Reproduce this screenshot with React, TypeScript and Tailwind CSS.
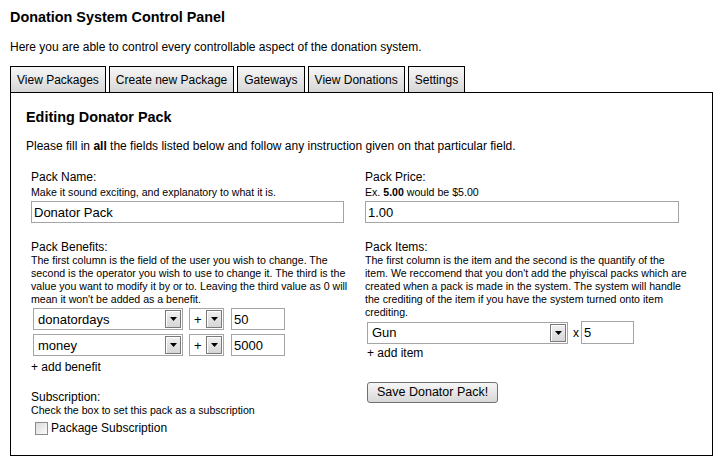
import React from "react";

function Select({ value, width }: { value: string; width: string }) {
  return (
    <div className={`flex h-[22px] items-stretch border border-[#a5a5a5] bg-white ${width}`}>
      <div className="flex flex-1 items-center pl-[4px] text-[13px] leading-none text-black">{value}</div>
      <div className="m-px flex w-[16px] items-center justify-center border border-[#7a7a7a] bg-linear-to-b from-[#f0f0f0] to-[#d6d6d6] shadow-[inset_1px_1px_0_#ffffff]">
        <svg width="7" height="4" viewBox="0 0 7 4">
          <path d="M0 0 H7 L3.5 4 Z" fill="#000" />
        </svg>
      </div>
    </div>
  );
}

function Input({ value, width, h = "h-[22px]" }: { value: string; width: string; h?: string }) {
  return (
    <div className={`flex ${h} items-center border border-[#a5a5a5] bg-white pl-[2px] text-[13px] leading-none text-black ${width}`}>
      {value}
    </div>
  );
}

export default function App() {
  const tabs = ["View Packages", "Create new Package", "Gateways", "View Donations", "Settings"];
  return (
    <div className="h-[472px] w-[725px] bg-white pl-[10px] text-black" style={{ fontFamily: "'Liberation Sans', Arial, sans-serif" }}>
      <div className="pt-[7px] text-[14.4px] font-bold leading-[20px]">Donation System Control Panel</div>
      <div className="mt-[12px] text-[12px] leading-[16px]">
        Here you are able to control every controllable aspect of the donation system.
      </div>
      <div className="mt-[11px] flex gap-[3px]">
        {tabs.map((t) => (
          <div
            key={t}
            className="flex h-[26px] items-center border border-b-0 border-black bg-linear-to-b from-[#f7f7f7] to-[#d6d6d6] px-[6px] text-[12px]"
          >
            {t}
          </div>
        ))}
      </div>
      <div className="h-[364px] w-[703px] border border-black pl-[15px] pt-[14px]">
        <div className="text-[14.4px] font-bold leading-[20px]">Editing Donator Pack</div>
        <div className="mt-[11px] text-[12px] leading-[16px]">
          Please fill in <b>all</b> the fields listed below and follow any instruction given on that particular field.
        </div>
        <div className="mt-[16px] grid grid-cols-[334px_1fr] pl-[5px]">
          <div>
            <div className="text-[12px] leading-[14px]">Pack Name:</div>
            <div className="mt-[2px] text-[10.6px] leading-[12px]">Make it sound exciting, and explanatory to what it is.</div>
            <div className="mt-[3px]">
              <Input value="Donator Pack" width="w-[313px]" />
            </div>
            <div className="mt-[17px] text-[12px] leading-[14px]">Pack Benefits:</div>
            <div className="whitespace-nowrap text-[10.6px] leading-[13px]">
              <div>The first column is the field of the user you wish to change. The</div>
              <div>second is the operator you wish to use to change it. The third is the</div>
              <div>value you want to modify it by or to. Leaving the third value as 0 will</div>
              <div>mean it won't be added as a benefit.</div>
            </div>
            <div className="mt-[2px] flex flex-col gap-[4px] pl-[2px]">
              {[
                ["donatordays", "50"],
                ["money", "5000"],
              ].map(([f, v]) => (
                <div key={f} className="flex items-center">
                  <Select value={f} width="w-[150px]" />
                  <div className="ml-[6px]">
                    <Select value="+" width="w-[35px]" />
                  </div>
                  <div className="ml-[7px]">
                    <Input value={v} width="w-[54px]" />
                  </div>
                </div>
              ))}
            </div>
            <div className="mt-[3px] text-[12px] leading-[16px]">+ add benefit</div>
            <div className="mt-[15px] text-[12px] leading-[14px]">Subscription:</div>
            <div className="text-[10.6px] leading-[12px]">Check the box to set this pack as a subscription</div>
            <div className="mt-[4px] flex items-center pl-[4px]">
              <div className="h-[13px] w-[13px] border border-[#8c8c8c] bg-linear-to-br from-[#dcdcdc] to-[#fafafa]" />
              <span className="ml-[3px] text-[12px] leading-[16px]">Package Subscription</span>
            </div>
          </div>
          <div>
            <div className="text-[12px] leading-[14px]">Pack Price:</div>
            <div className="mt-[2px] text-[10.6px] leading-[12px]">
              Ex. <b>5.00</b> would be $5.00
            </div>
            <div className="mt-[3px]">
              <Input value="1.00" width="w-[314px]" />
            </div>
            <div className="mt-[17px] text-[12px] leading-[14px]">Pack Items:</div>
            <div className="whitespace-nowrap text-[10.6px] leading-[13px]">
              <div>The first column is the item and the second is the quantify of the</div>
              <div>item. We reccomend that you don't add the phyiscal packs which are</div>
              <div>created when a pack is made in the system. The system will handle</div>
              <div>the crediting of the item if you have the system turned onto item</div>
              <div>crediting.</div>
            </div>
            <div className="mt-[2px] flex h-[23px] items-center pl-[2px]">
              <Select value="Gun" width="w-[201px]" />
              <span className="ml-[5px] text-[12px]">x</span>
              <div className="ml-[2px]">
                <Input value="5" width="w-[53px]" h="h-[23px]" />
              </div>
            </div>
            <div className="mt-[1px] pl-[2px] text-[12px] leading-[16px]">+ add item</div>
            <div className="mt-[18px] pl-[2px]">
              <div className="inline-flex h-[21px] items-center rounded-[3px] border border-[#707070] bg-linear-to-b from-[#f6f6f6] to-[#d8d8d8] px-[9px] text-[12.5px] leading-none">
                Save Donator Pack!
              </div>
            </div>
          </div>
        </div>
      </div>
    </div>
  );
}
